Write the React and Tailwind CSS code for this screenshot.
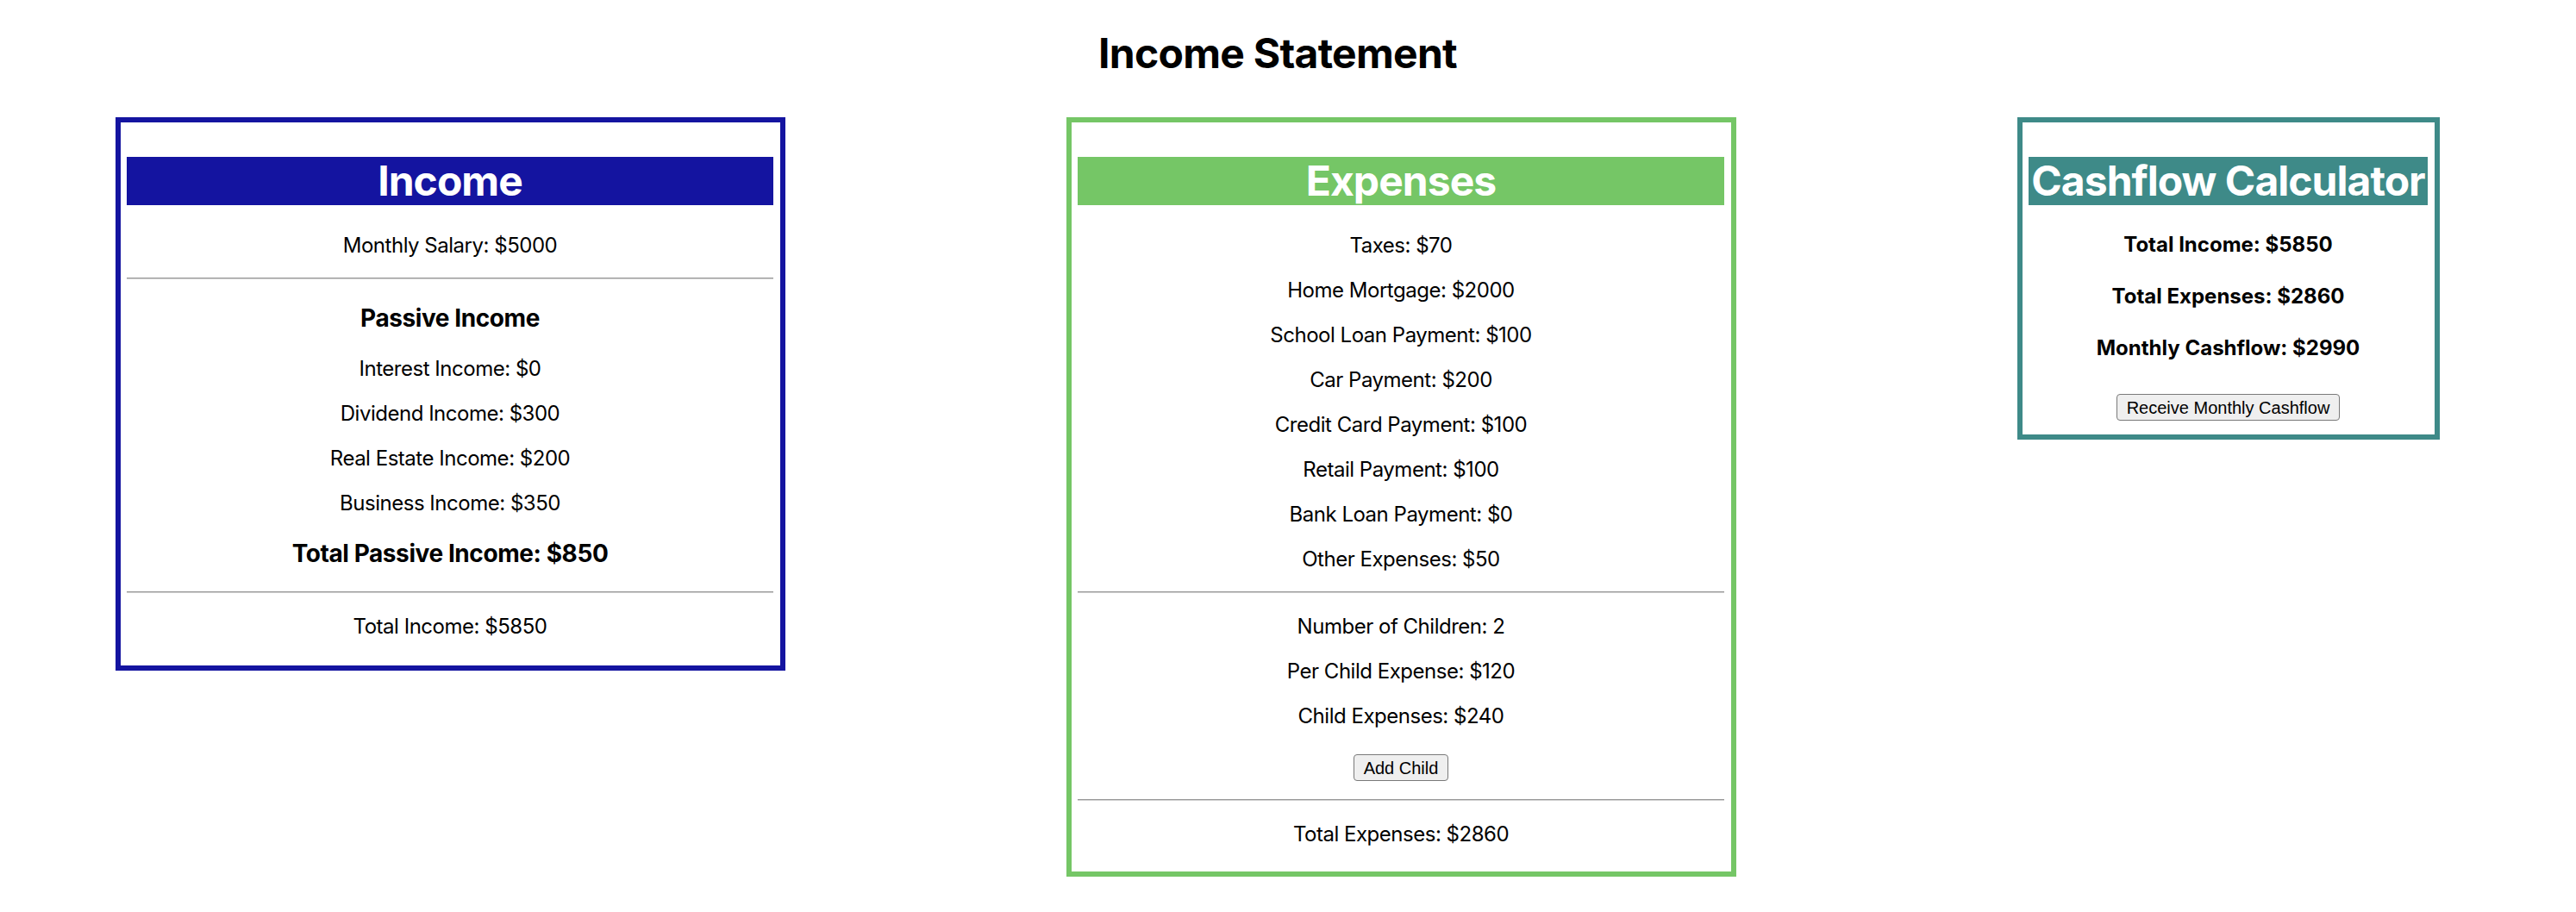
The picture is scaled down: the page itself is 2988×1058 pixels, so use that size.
import React from "react";

function Row({ children, className = "" }) {
  return (
    <p className={`text-[24px] leading-[28px] tracking-[-0.02em] text-black ${className}`}>{children}</p>
  );
}

function Hr({ className = "" }) {
  return (
    <div
      className={`h-[2px] w-full border-t border-b border-t-[#999999] border-b-[#cfcfcf] ${className}`}
    />
  );
}

function Btn({ children, className = "" }) {
  return (
    <button
      className={`self-center h-[31px] px-[11px] rounded-[4px] border border-[#7a7a7a] bg-[#efefef] text-[20px] leading-none text-black font-['Liberation_Sans',Arial,sans-serif] ${className}`}
    >
      {children}
    </button>
  );
}

function Heading({ children, bg }) {
  return (
    <h2
      className={`mt-[33px] h-[56px] ${bg} text-white text-[48px] leading-[56px] font-bold tracking-[-0.02em] whitespace-nowrap text-center`}
    >
      {children}
    </h2>
  );
}

export default function App() {
  return (
    <div className="w-[2964px] bg-white font-[Inter,'Noto_Sans',sans-serif] text-black pb-[40px]">
      <h1 className="mt-[33px] text-center text-[48px] leading-[58px] font-bold tracking-[-0.015em]">
        Income Statement
      </h1>
      <div className="mt-[45px] px-[134px] flex justify-between items-start">
        {/* Income */}
        <div className="w-[777px] border-[6px] border-[#1414a0] pl-[7px] pr-[8px] pt-[7px] pb-[31px] flex flex-col text-center">
          <Heading bg="bg-[#1414a0]">Income</Heading>
          <Row className="mt-[33px]">Monthly Salary: $5000</Row>
          <Hr className="mt-[23px]" />
          <h3 className="mt-[28px] text-[28px] leading-[34px] font-bold tracking-[-0.015em]">Passive Income</h3>
          <Row className="mt-[28px]">Interest Income: $0</Row>
          <Row className="mt-[24px]">Dividend Income: $300</Row>
          <Row className="mt-[24px]">Real Estate Income: $200</Row>
          <Row className="mt-[24px]">Business Income: $350</Row>
          <h3 className="mt-[27px] text-[28px] leading-[34px] font-bold tracking-[-0.015em]">
            Total Passive Income: $850
          </h3>
          <Hr className="mt-[27px]" />
          <Row className="mt-[25px]">Total Income: $5850</Row>
        </div>

        {/* Expenses */}
        <div className="w-[777px] border-[6px] border-[#75c666] pl-[7px] pr-[8px] pt-[7px] pb-[29px] flex flex-col text-center">
          <Heading bg="bg-[#75c666]">Expenses</Heading>
          <Row className="mt-[33px]">Taxes: $70</Row>
          <Row className="mt-[24px]">Home Mortgage: $2000</Row>
          <Row className="mt-[24px]">School Loan Payment: $100</Row>
          <Row className="mt-[24px]">Car Payment: $200</Row>
          <Row className="mt-[24px]">Credit Card Payment: $100</Row>
          <Row className="mt-[24px]">Retail Payment: $100</Row>
          <Row className="mt-[24px]">Bank Loan Payment: $0</Row>
          <Row className="mt-[24px]">Other Expenses: $50</Row>
          <Hr className="mt-[23px]" />
          <Row className="mt-[25px]">Number of Children: 2</Row>
          <Row className="mt-[24px]">Per Child Expense: $120</Row>
          <Row className="mt-[24px]">Child Expenses: $240</Row>
          <Btn className="mt-[30px]">Add Child</Btn>
          <Hr className="mt-[21px]" />
          <Row className="mt-[25px]">Total Expenses: $2860</Row>
        </div>

        {/* Cashflow */}
        <div className="w-[490px] border-[6px] border-[#3e8a88] pl-[7px] pr-[8px] pt-[7px] pb-[16px] flex flex-col text-center">
          <Heading bg="bg-[#3e8a88]">Cashflow Calculator</Heading>
          <h4 className="mt-[32px] text-[24px] leading-[28px] font-bold">Total Income: $5850</h4>
          <h4 className="mt-[32px] text-[24px] leading-[28px] font-bold">Total Expenses: $2860</h4>
          <h4 className="mt-[32px] text-[24px] leading-[28px] font-bold">Monthly Cashflow: $2990</h4>
          <Btn className="mt-[39px]">Receive Monthly Cashflow</Btn>
        </div>
      </div>
    </div>
  );
}
